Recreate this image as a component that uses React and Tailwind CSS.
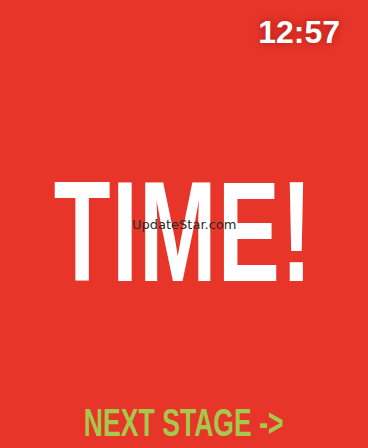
import React from "react";

const App = () => {
  return (
    <div className="w-[368px] h-[448px] bg-[#e8352a] flex flex-col overflow-hidden" style={{ fontFamily: "'Liberation Sans', Arial, sans-serif" }}>
      <div className="flex justify-end pt-[14px] pr-[28px]">
        <span className="text-white font-bold text-[32px] leading-[36px] [text-shadow:0_0_8px_rgba(120,0,0,0.6)]">
          12:57
        </span>
      </div>

      <div className="flex-1 flex items-center justify-center relative">
        <span className="text-white font-bold text-[143px] leading-none inline-block scale-x-[0.65] tracking-[2px] mt-[10px]">
          TIME!
        </span>
        <span className="absolute left-[132px] top-[165px] text-[13px] text-[#2a2a2a] font-normal" style={{ fontFamily: "'DejaVu Sans', sans-serif" }}>
          UpdateStar.com
        </span>
      </div>

      <div className="flex justify-center pb-[5px]">
        <span className="text-[#a6c84c] font-bold text-[38px] leading-[40px] inline-block scale-x-[0.7]">
          NEXT STAGE -&gt;
        </span>
      </div>
    </div>
  );
};

export default App;
